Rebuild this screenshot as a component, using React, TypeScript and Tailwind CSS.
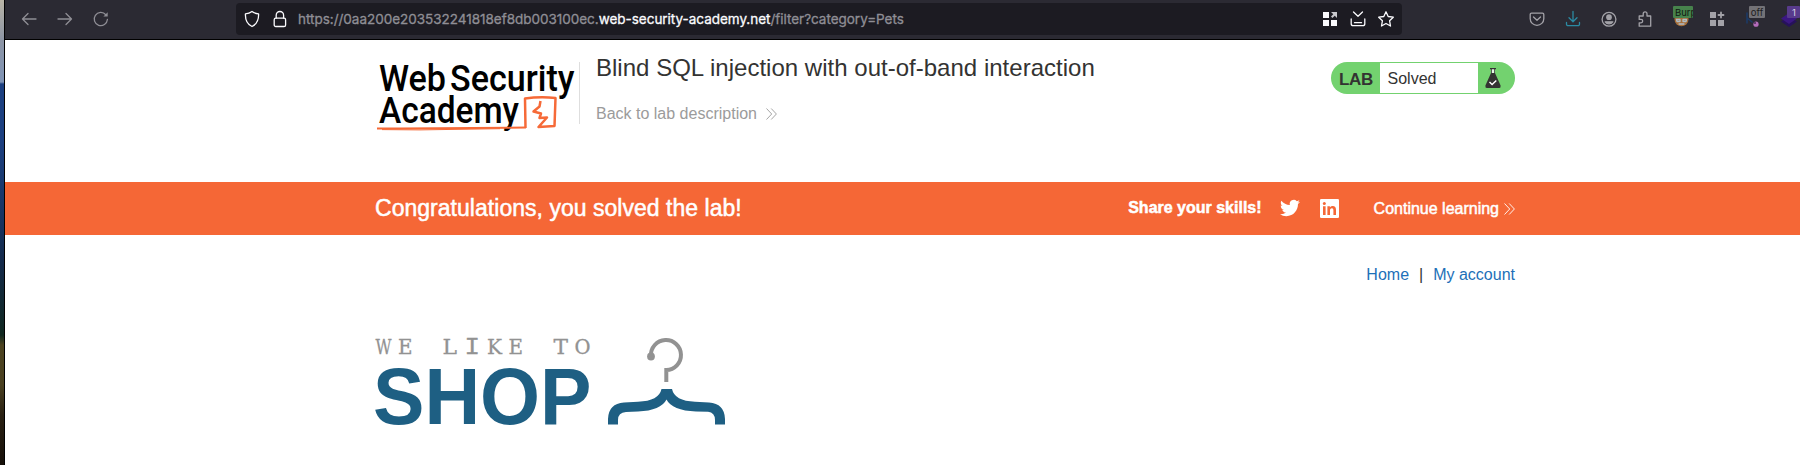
import React from "react";

type IconProps = { className?: string; children: React.ReactNode; box?: string };

function Icon({ className = "", children, box = "0 0 16 16" }: IconProps) {
  return (
    <svg
      viewBox={box}
      className={`block h-4 w-4 shrink-0 overflow-visible ${className}`}
      fill="none"
      stroke="currentColor"
      strokeWidth="1.3"
      strokeLinecap="round"
      strokeLinejoin="round"
    >
      {children}
    </svg>
  );
}

function Chevrons({ className = "" }: { className?: string }) {
  return (
    <svg viewBox="0 0 11 12" className={`block h-3 w-[11px] shrink-0 ${className}`} fill="none" stroke="currentColor" strokeWidth="0.9">
      <path d="M0.5 0.5 5.7 6 0.5 11.5M5.2 0.5 10.4 6 5.2 11.5" />
    </svg>
  );
}

function Toolbar() {
  return (
    <header className="flex h-10 shrink-0 items-start border-b border-black bg-[#2b2a33] font-['Inter',sans-serif]">
      <nav className="flex h-[38px] w-[231px] items-center gap-5 pl-4 text-[#8f8e95]">
        <Icon>
          <path d="M15 8H1.5M7 2.5 1.5 8 7 13.5" />
        </Icon>
        <Icon>
          <path d="M1 8h13.5M9 2.5 14.5 8 9 13.5" />
        </Icon>
        <Icon>
          <path d="M14.4 8.5A6.6 6.6 0 1 1 12.8 3.7" />
          <path d="M10.4 5.6h4.3V1.3z" fill="currentColor" stroke="none" />
        </Icon>
      </nav>
      <div className="mt-[3px] flex h-8 w-[1166px] items-center rounded bg-[#1c1b22] pl-2 text-[#fbfbfe]">
        <Icon>
          <path d="M8 .5C10 2 12.300 2.700 14.600 2.900 14.800 8.500 13.200 13 8 15.500 2.800 13 1.200 8.500 1.400 2.900 3.700 2.700 6 2 8 .5Z" />
        </Icon>
        <Icon className="ml-3">
          <rect x="2.200" y="7.200" width="11.400" height="8.300" rx="1.600" />
          <path d="M4.200 7V4.200a3.700 3.700 0 0 1 7.400 0V7" />
        </Icon>
        <div className="ml-[10px] w-[1024px] whitespace-nowrap text-[13.5px] leading-[34px] tracking-[-0.020px] text-[#8f8e95] [-webkit-text-stroke:0.3px_currentColor]">
          https://0aa200e203532241818ef8db003100ec.<span className="text-[#fbfbfe]">web-security-academy.net</span>/filter?category=Pets
        </div>
        <Icon>
          <path d="M1 1h6v6H1zM1 9h6v6H1zM9 9h6v6H9z" fill="currentColor" stroke="none" />
          <path d="M9 1h6v6l-2.200-2.200L10.400 7 9 5.600l2.300-2.300z" fill="#c9c9cd" stroke="none" />
        </Icon>
        <Icon className="ml-3">
          <path d="M3.500 1 8 5.200 12.500 1M1.200 8v4.700a2 2 0 0 0 2 2h9.600a2 2 0 0 0 2-2V8M4.500 11.700h7" />
        </Icon>
        <Icon className="ml-3">
          <path d="m8 .8 2.200 4.700 5.100.7-3.700 3.600.9 5.200L8 12.500 3.500 15l.9-5.200L.7 6.200l5.100-.7z" />
        </Icon>
      </div>
      <div className="flex h-[38px] flex-1 items-center overflow-hidden pl-[127px] text-[#a3a2a8]">
        <Icon>
          <path d="M2.500 2.200h11A1.300 1.300 0 0 1 14.800 3.500v4.300a6.800 6.500 0 0 1-13.600 0V3.500A1.300 1.300 0 0 1 2.500 2.200ZM4.500 6 8 9.200 11.500 6" />
        </Icon>
        <Icon className="ml-5 text-[#2b8aa3]">
          <path d="M8 .5V10.500M4 6.800 8 10.700 12 6.800M1.500 11.500v1.700a1.500 1.500 0 0 0 1.500 1.500h10a1.500 1.500 0 0 0 1.500-1.500V11.500" />
        </Icon>
        <Icon className="ml-5">
          <circle cx="8" cy="8.300" r="6.900" />
          <circle cx="8" cy="6.200" r="2.200" fill="currentColor" />
          <path d="M4.200 10.800a4.600 4.600 0 0 0 7.600 0z" fill="currentColor" />
        </Icon>
        <Icon className="ml-5">
          <path d="M2.200 5h4V2.800a1.900 1.900 0 0 1 3.800 0V5h3.700v10.200H2.200V11.800H4a1.700 1.700 0 0 0 0-3.400H2.200z" />
        </Icon>
        <div className="relative ml-5 h-4 w-4">
          <Icon>
            <circle cx="8.500" cy="8.300" r="7" fill="#a86f38" stroke="none" />
            <path d="M3.500 8.500h3.500v2H4zM10 8.500h3.500l-.5 2h-3zM6 13h5" stroke="#aebcc6" />
          </Icon>
          <span className="absolute -top-[5px] left-0 h-3 w-5 overflow-hidden rounded-[1px] bg-[#47824c] pl-0.5 text-[9.500px] leading-[14px] text-[#101a12]">Burp</span>
        </div>
        <Icon className="ml-5">
          <path d="M1 1h6v6H1zM1 9h6v6H1zM9 9h6v6H9z" fill="currentColor" stroke="none" />
          <path d="M12 1.500v5M9.500 4h5" strokeWidth="1.800" />
        </Icon>
        <div className="relative ml-5 h-4 w-4">
          <Icon>
            <path d="M2 2v10M2 7l5 4" stroke="#1c3a66" strokeWidth="1.600" />
            <circle cx="11" cy="13.200" r="2.600" fill="#b46cba" stroke="none" />
            <circle cx="10" cy="12" r="1" fill="#482d58" stroke="none" />
          </Icon>
          <span className="absolute -top-[5px] left-1 h-3 w-4 rounded-[1px] bg-[#737277] text-center text-[9.500px] leading-[14px] text-[#1d1d20]">off</span>
        </div>
        <div className="relative ml-5 h-4 w-4">
          <Icon>
            <path d="M0 10.500 8 5l8 5.500L8 16z" fill="#27115c" stroke="none" />
            <path d="M0 7.500 8 2l8 5.500L8 13z" fill="#3b1782" stroke="none" />
          </Icon>
          <span className="absolute -top-[5px] left-[6px] h-3 w-[13px] rounded-[1px] bg-[#583b8c] pl-[5px] text-[9.500px] leading-[14px] text-[#d8d4e0]">1</span>
        </div>
      </div>
    </header>
  );
}

function AcademyLogo() {
  return (
    <svg viewBox="375 58 200 74" className="block h-[74px] w-[200px] shrink-0 overflow-visible">
      <g fill="#000" fontFamily="Roboto, sans-serif" fontWeight="500" fontSize="37.500">
        <text x="379" y="90.800" textLength="67" lengthAdjust="spacingAndGlyphs">Web</text>
        <text x="450" y="90.800" textLength="124.500" lengthAdjust="spacingAndGlyphs">Security</text>
        <text x="379" y="123" textLength="140" lengthAdjust="spacingAndGlyphs">Academy</text>
      </g>
      <g fill="none" stroke="#f66a38" strokeWidth="2.500" strokeLinejoin="round">
        <path d="M525.500 128 525 98.500Q540 96.500 555.500 98L554.500 126 538.500 127 547 117.500 539.500 118 541 113.500 533.500 111.500 539.500 106.500 540.500 101" />
        <path d="M377 128.600 400 128.500 526 127.500" strokeWidth="2" />
        <path d="M382 129.600 420 129.900 500 128.700" strokeWidth="1" />
      </g>
    </svg>
  );
}

function LabStatus() {
  return (
    <div className="mt-[22px] flex h-8 w-[184px] overflow-hidden rounded-full bg-[#73d26f] py-px text-[#333332]">
      <span className="w-[49px] pl-2 text-[17px] font-bold leading-[34px] tracking-[-0.3px]">LAB</span>
      <span className="w-[98px] bg-white pl-[7.5px] text-[16px] leading-[31px]">Solved</span>
      <svg viewBox="0 0 16 20" className="ml-[7px] mt-[5px] block h-5 w-4">
        <path d="M5 .7h6" stroke="#333332" strokeWidth="1.200" />
        <path d="M6 1v4L.4 17.500Q0 20 1.800 20h12.400q1.800 0 1.400-2.500L10 5V1z" fill="#333332" />
        <path d="M6.800 1.300h2.400v3.700H6.800z" fill="#e8f8e8" />
        <path d="m4.500 14 2.600 2.500 4.200-4" fill="none" stroke="#fff" strokeWidth="1.400" />
      </svg>
    </div>
  );
}

const taglineLetters = [
  { char: "W", x: 375.5, width: 16 },
  { char: "E", x: 398, width: 14.5 },
  { char: "L", x: 442.5, width: 14.5 },
  { char: "I", x: 464.5, width: 15.5, mono: true },
  { char: "K", x: 487, width: 15 },
  { char: "E", x: 508.5, width: 14.5 },
  { char: "T", x: 553.5, width: 14.5 },
  { char: "O", x: 574.5, width: 16 },
];

function ShopLogo() {
  return (
    <svg viewBox="375 330 360 100" className="block h-[100px] w-[360px] overflow-visible">
      <g fill="#929292" stroke="#929292" strokeWidth="0.300">
        {taglineLetters.map((letter) => (
          <text
            key={letter.x}
            x={letter.x}
            y="354"
            textLength={letter.width}
            lengthAdjust="spacingAndGlyphs"
            fontFamily={letter.mono ? "'Liberation Mono', monospace" : "'DejaVu Serif', serif"}
            fontSize={letter.mono ? "23" : "20.500"}
          >
            {letter.char}
          </text>
        ))}
      </g>
      <text x="373" y="424.300" fill="#1e5f83" fontFamily="'Liberation Sans', Arial, sans-serif" fontWeight="700" fontSize="80.500" textLength="218.500" lengthAdjust="spacingAndGlyphs">SHOP</text>
      <path d="M651 356A15 15 0 1 1 666.300 370V382" fill="none" stroke="#929292" strokeWidth="4" />
      <circle cx="651" cy="356.500" r="3.900" fill="#929292" />
      <path
        fill="#1e5f83"
        d="M608 424.500V419Q608.500 403.500 624 402.500L638 401.700Q659 401 661.500 389H672Q674.500 401 695 401.700L709 402.500Q724.500 403.500 725 419V424.500H715V420Q715 412.500 708 411.700L696 411.500Q672 410.500 666.500 399.500 661 410.500 638 411.500L626 412Q618 412.500 618 420V424.500Z"
      />
    </svg>
  );
}

export default function App() {
  return (
    <div className="flex h-[465px] w-[1800px] overflow-hidden bg-white font-['Liberation_Sans',Arial,sans-serif]">
      <div className="w-[5px] shrink-0 border-r border-black bg-[linear-gradient(to_bottom,#b9b4a6_0px,#8d95a5_40px,#7f93b5_82px,#1c3f80_84px,#1c3f80_140px,#183769_200px,#142a4c_260px,#10281f_335px,#4c4320_345px,#4a4020_385px,#2a2113_415px,#160f09_465px)]" />
      <div className="flex min-w-0 flex-1 flex-col">
        <Toolbar />
        <section className="ml-[370px] flex h-[142px] w-[1140px] shrink-0 items-start">
          <div className="mt-[18px]">
            <AcademyLogo />
          </div>
          <div className="ml-1 mt-[22px] h-[62px] w-px bg-[#dedede]" />
          <div className="flex-1 pl-4 pt-3.5">
            <h1 className="whitespace-nowrap text-[24px] leading-7 tracking-[0.015px] text-[#333332]">Blind SQL injection with out-of-band interaction</h1>
            <a className="mt-[22px] flex items-center text-[16px] leading-5 text-[#9b9b9b]">
              Back to lab description
              <Chevrons className="ml-[9px]" />
            </a>
          </div>
          <LabStatus />
        </section>
        <section className="h-[53px] shrink-0 bg-[#f56736] pl-[370px] text-white">
          <div className="flex h-full w-[1140px] items-center [-webkit-text-stroke:0.5px_white]">
            <p className="flex-1 text-[23px] tracking-[0.03px]">Congratulations, you solved the lab!</p>
            <span className="mb-0.5 text-[16px] font-bold leading-5">Share your skills!</span>
            <svg viewBox="0 0 24 24" className="mb-0.5 ml-[18px] h-5 w-5" fill="white">
              <path d="M23.953 4.570a10 10 0 01-2.825.775 4.958 4.958 0 002.163-2.723c-.951.555-2.005.959-3.127 1.184a4.920 4.920 0 00-8.384 4.482C7.690 8.095 4.067 6.130 1.640 3.162a4.822 4.822 0 00-.666 2.475c0 1.710.870 3.213 2.188 4.096a4.904 4.904 0 01-2.228-.616v.060a4.923 4.923 0 003.946 4.827 4.996 4.996 0 01-2.212.085 4.936 4.936 0 004.604 3.417 9.867 9.867 0 01-6.102 2.105c-.390 0-.779-.023-1.170-.067a13.995 13.995 0 007.557 2.209c9.053 0 13.998-7.496 13.998-13.985 0-.210 0-.420-.015-.630A9.935 9.935 0 0024 4.590z" />
            </svg>
            <svg viewBox="0 0 19 19" className="ml-5 h-[19px] w-[19px]">
              <rect width="19" height="19" rx="1.300" fill="white" />
              <path d="M3 7.200h2.600V16H3zM7.400 7.200h2.500v1.300c.6-1 1.500-1.500 2.700-1.500 2.500 0 3.400 1.500 3.400 4.100V16h-2.600v-4.500c0-1.300-.4-2.200-1.500-2.200-1.300 0-1.900.9-1.900 2.300V16H7.400z" fill="#f56736" />
              <circle cx="4.300" cy="4.400" r="1.500" fill="#f56736" />
            </svg>
            <a className="ml-[35px] flex items-center text-[16px] leading-5">
              Continue learning
              <Chevrons className="ml-[5px]" />
            </a>
          </div>
        </section>
        <main className="ml-[370px] flex w-[1140px] flex-col">
          <nav className="mt-[30px] flex h-5 justify-end text-[16px] leading-5 text-[#1d70b8]">
            <a>Home</a>
            <span className="mx-[10px] text-[#333332]">|</span>
            <a>My account</a>
          </nav>
          <div className="mt-[45px]">
            <ShopLogo />
          </div>
        </main>
      </div>
    </div>
  );
}
